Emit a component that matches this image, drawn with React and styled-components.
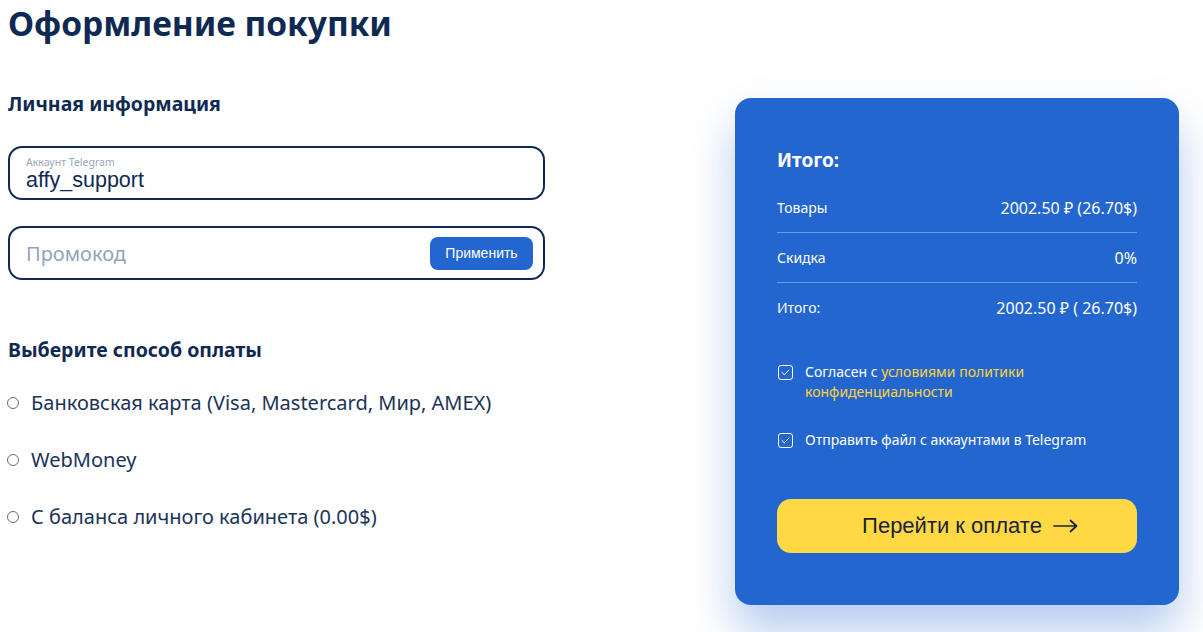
import React from "react";
import styled, { createGlobalStyle } from "styled-components";

const GlobalStyle = createGlobalStyle`
  body {
    margin: 0;
    background: #ffffff;
    font-family: "Noto Sans", "Open Sans", sans-serif;
    color: #0f2a52;
  }
`;

const Page = styled.div`
  box-sizing: border-box;
  min-height: 100vh;
  padding: 0 8px 40px;
  overflow: hidden;
`;

const Title = styled.h1`
  margin: 0;
  font-size: 33.5px;
  line-height: 46px;
  font-weight: 700;
  color: #0f2a52;
`;

const Row = styled.div`
  display: flex;
  align-items: flex-start;
  gap: 190px;
  margin-top: 46px;
`;

const Left = styled.div`
  width: 537px;
  display: flex;
  flex-direction: column;
`;

const SectionTitle = styled.h2`
  margin: ${(p) => p.$top || 0}px 0 0;
  font-size: 19.5px;
  line-height: 24px;
  font-weight: 700;
  color: #0f2a52;
`;

const Field = styled.div`
  box-sizing: border-box;
  height: 54px;
  margin-top: ${(p) => p.$top}px;
  border: 2px solid #0f2a52;
  border-radius: 14px;
  display: flex;
  align-items: center;
  padding: 0 10px 0 16px;
`;

const FieldStack = styled.div`
  display: flex;
  flex-direction: column;
  flex: 1;
  padding-top: 2px;
`;

const FieldLabel = styled.span`
  font-size: 10.5px;
  line-height: 12px;
  color: #9aa6b8;
`;

const FieldValue = styled.span`
  font-family: "Liberation Sans", Arial, sans-serif;
  font-size: 21.5px;
  line-height: 24px;
  color: #0f2a52;
`;

const Placeholder = styled.span`
  flex: 1;
  font-size: 20px;
  color: #93a3ba;
`;

const ApplyButton = styled.button`
  height: 33px;
  width: 103px;
  border: none;
  border-radius: 8px;
  background: #2366cf;
  color: #ffffff;
  font-family: "Liberation Sans", Arial, sans-serif;
  font-size: 14px;
  cursor: pointer;
`;

const Options = styled.div`
  display: flex;
  flex-direction: column;
  gap: 33px;
  margin-top: 29px;
`;

const Option = styled.label`
  display: flex;
  align-items: center;
  gap: 12px;
  font-size: 20px;
  line-height: 24px;
  color: #1b3358;
  cursor: pointer;
`;

const Radio = styled.span`
  box-sizing: border-box;
  width: 12px;
  height: 12px;
  margin-left: -1px;
  border: 1px solid #6b6b6b;
  border-radius: 50%;
  flex-shrink: 0;
`;

const Card = styled.div`
  box-sizing: border-box;
  width: 444px;
  margin-top: 6px;
  padding: 50px 42px 52px;
  border-radius: 16px;
  background: #2366cf;
  color: #ffffff;
  box-shadow: 0 26px 46px rgba(35, 102, 207, 0.34);
`;

const CardTitle = styled.div`
  font-size: 19px;
  line-height: 24px;
  font-weight: 700;
  margin-bottom: 11px;
`;

const SumRow = styled.div`
  box-sizing: border-box;
  height: 50px;
  display: flex;
  align-items: center;
  justify-content: space-between;
  font-size: 14px;
  border-bottom: 1px solid ${(p) => (p.$last ? "transparent" : "rgba(255,255,255,0.35)")};
`;

const SumValue = styled.span`
  font-size: 16px;
`;

const Check = styled.div`
  display: flex;
  align-items: flex-start;
  gap: 12px;
  margin-top: ${(p) => p.$top}px;
  font-size: 14px;
  line-height: 20px;
`;

const Box = styled.span`
  box-sizing: border-box;
  width: 15px;
  height: 15px;
  margin: 3px 0 0 1px;
  border: 1px solid #ffffff;
  border-radius: 3px;
  display: flex;
  align-items: center;
  justify-content: center;
  flex-shrink: 0;
`;

const Link = styled.span`
  color: #ffd43b;
`;

const PayButton = styled.button`
  width: 100%;
  height: 54px;
  margin-top: 49px;
  padding-left: 32px;
  border: none;
  border-radius: 14px;
  background: #ffd943;
  color: #1b1f3b;
  font-family: "Liberation Sans", Arial, sans-serif;
  font-size: 22px;
  display: flex;
  align-items: center;
  justify-content: center;
  gap: 11px;
  cursor: pointer;
`;

function Tick() {
  return (
    <svg width="9" height="7" viewBox="0 0 9 7" fill="none">
      <path d="M1 3.6 L3.3 5.8 L8 1" stroke="#fff" strokeWidth="1" strokeLinecap="round" strokeLinejoin="round" />
    </svg>
  );
}

function Arrow() {
  return (
    <svg width="25" height="14" viewBox="0 0 25 14" fill="none">
      <path d="M1 7 H23.5 M17.5 1.5 L23.5 7 L17.5 12.5" stroke="#1b1f3b" strokeWidth="1.7" strokeLinecap="round" strokeLinejoin="round" />
    </svg>
  );
}

const methods = [
  "Банковская карта (Visa, Mastercard, Мир, AMEX)",
  "WebMoney",
  "С баланса личного кабинета (0.00$)",
];

const totals = [
  ["Товары", "2002.50 ₽ (26.70$)"],
  ["Скидка", "0%"],
  ["Итого:", "2002.50 ₽ ( 26.70$)"],
];

export default function App() {
  return (
    <Page>
      <GlobalStyle />
      <Title>Оформление покупки</Title>
      <Row>
        <Left>
          <SectionTitle>Личная информация</SectionTitle>
          <Field $top={30}>
            <FieldStack>
              <FieldLabel>Аккаунт Telegram</FieldLabel>
              <FieldValue>affy_support</FieldValue>
            </FieldStack>
          </Field>
          <Field $top={26}>
            <Placeholder>Промокод</Placeholder>
            <ApplyButton>Применить</ApplyButton>
          </Field>
          <SectionTitle $top={58}>Выберите способ оплаты</SectionTitle>
          <Options>
            {methods.map((m) => (
              <Option key={m}>
                <Radio />
                {m}
              </Option>
            ))}
          </Options>
        </Left>
        <Card>
          <CardTitle>Итого:</CardTitle>
          {totals.map(([k, v], i) => (
            <SumRow key={k} $last={i === totals.length - 1}>
              <span>{k}</span>
              <SumValue>{v}</SumValue>
            </SumRow>
          ))}
          <Check $top={29}>
            <Box><Tick /></Box>
            <span>
              Согласен с <Link>условиями политики<br />конфиденциальности</Link>
            </span>
          </Check>
          <Check $top={28}>
            <Box><Tick /></Box>
            <span>Отправить файл с аккаунтами в Telegram</span>
          </Check>
          <PayButton>
            Перейти к оплате <Arrow />
          </PayButton>
        </Card>
      </Row>
    </Page>
  );
}
